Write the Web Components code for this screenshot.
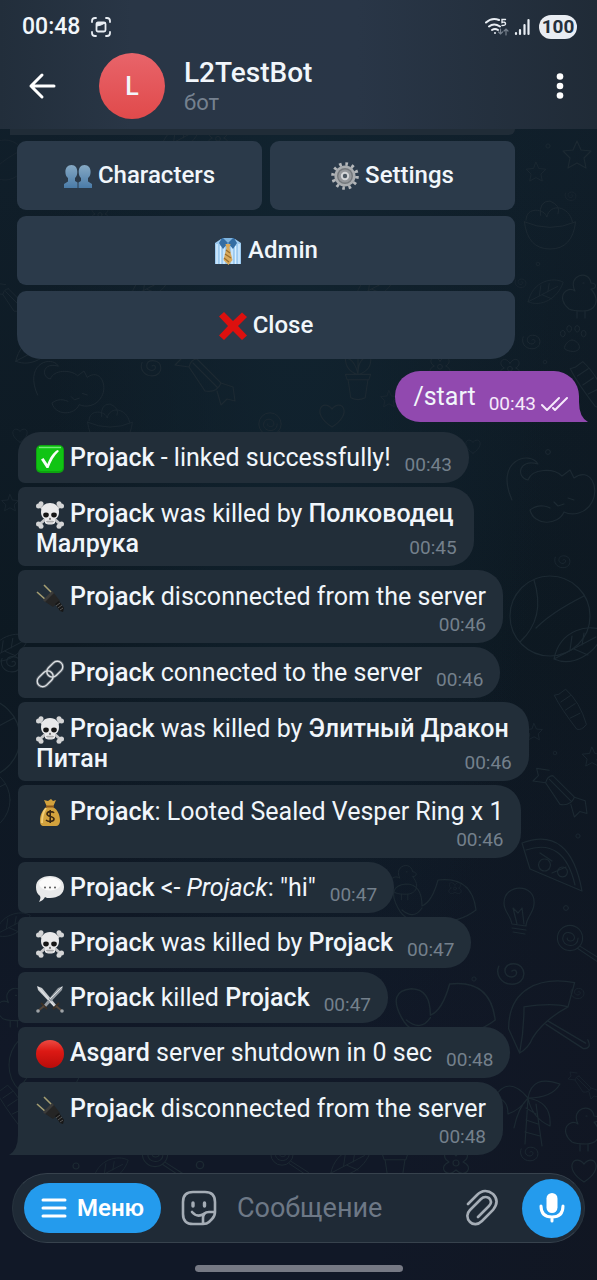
<!DOCTYPE html>
<html lang="ru">
<head>
<meta charset="utf-8">
<meta name="viewport" content="width=device-width, initial-scale=1">
<title>L2TestBot</title>
<style>
  html, body { margin: 0; min-height: 100%; background: #101a24; }
  body { font-family: Roboto, "Noto Sans", sans-serif; color: #f1f6fb; }
  em { font-style: italic; }
  b { font-weight: 500; }
</style>
</head>
<body>
<chat-screen>
  <status-bar slot="top" time="00:48" battery="100"></status-bar>
  <chat-header slot="top" name="L2TestBot" kind="бот" initial="L"></chat-header>

  <inline-keyboard>
    <key-button><emoji-icon name="people"></emoji-icon>Characters</key-button>
    <key-button><emoji-icon name="gear"></emoji-icon>Settings</key-button>
    <key-button wide><emoji-icon name="shirt"></emoji-icon>Admin</key-button>
    <key-button wide last><emoji-icon name="cross"></emoji-icon>Close</key-button>
  </inline-keyboard>

  <chat-message out time="00:43">/start</chat-message>
  <chat-message first time="00:43"><emoji-icon name="check"></emoji-icon><b>Projack</b> - linked successfully!</chat-message>
  <chat-message wrapped time="00:45"><emoji-icon name="skull"></emoji-icon><b>Projack</b> was killed by <b>Полководец<br>Малрука</b></chat-message>
  <chat-message below time="00:46"><emoji-icon name="plug"></emoji-icon><b>Projack</b> disconnected from the server</chat-message>
  <chat-message time="00:46"><emoji-icon name="link"></emoji-icon><b>Projack</b> connected to the server</chat-message>
  <chat-message wrapped time="00:46"><emoji-icon name="skull"></emoji-icon><b>Projack</b> was killed by <b>Элитный Дракон<br>Питан</b></chat-message>
  <chat-message below time="00:46"><emoji-icon name="money"></emoji-icon><b>Projack</b>: Looted Sealed Vesper Ring x 1</chat-message>
  <chat-message time="00:47"><emoji-icon name="speech"></emoji-icon><b>Projack</b> &lt;- <em>Projack</em>: "hi"</chat-message>
  <chat-message time="00:47"><emoji-icon name="skull"></emoji-icon><b>Projack</b> was killed by <b>Projack</b></chat-message>
  <chat-message time="00:47"><emoji-icon name="swords"></emoji-icon><b>Projack</b> killed <b>Projack</b></chat-message>
  <chat-message time="00:48"><emoji-icon name="red"></emoji-icon><b>Asgard</b> server shutdown in 0 sec</chat-message>
  <chat-message below last time="00:48"><emoji-icon name="plug"></emoji-icon><b>Projack</b> disconnected from the server</chat-message>

  <message-composer slot="bottom"></message-composer>
</chat-screen>

<script>
const define = (name, render) => customElements.define(name, class extends HTMLElement {
  constructor() { super(); this.attachShadow({ mode: 'open' }); }
  connectedCallback() { this.shadowRoot.innerHTML = render(this); }
});

/* Emoji artwork, each on a 28 x 28 grid */
const EMOJI = {
  people: ['👥', `<defs><linearGradient id="g" x2="0" y2="1"><stop stop-color="#86a9c4"/><stop offset="1" stop-color="#4a7ba8"/></linearGradient></defs>
    <g fill="url(#g)"><path d="M7.500 3C11.500 3 13.300 6 13.300 10c0 3-1 5-2.300 6v3l2.500 1.500V26H0v-4l4-2.500V16c-1.500-1-2.600-3-2.600-6 0-4 2.100-7 6.100-7z"/><path d="M20.500 3c4 0 6.100 3 6.100 7 0 3-1.100 5-2.600 6v3.500l4 2.500v4H14.500v-5.500L17 19v-3c-1.300-1-2.300-3-2.300-6 0-4 1.800-7 5.800-7z"/></g>`],
  gear: ['⚙️', `<circle cx="14" cy="14" r="12" fill="none" stroke="#b4b7ba" stroke-width="3.600" stroke-dasharray="2.600 3.683"/>
    <circle cx="14" cy="14" r="10.600" fill="#a9acaf"/><circle cx="14" cy="14" r="8" fill="#74787c"/><circle cx="14" cy="14" r="6.600" fill="#94979b"/><circle cx="14" cy="14" r="3.200" fill="#4c5761" stroke="#d4d6d8" stroke-width="2"/>`],
  shirt: ['👔', `<path d="M7 2 1 6v21h26V6l-6-4z" fill="#9ccaf0"/><path d="M3 7v20M6.500 9v18M10 9v18M18 9v18M21.500 9v18M25 7v20" stroke="#d9efff" stroke-width="1.4"/>
    <path d="M8 1h12l3 5-4 6-5-6-5 6-4-6z" fill="#346da3"/><path d="m9 1 5 5 5-5z" fill="#7fb4df"/><path d="m11.500 7 5 0 -1 4 3 12-4 5-5-5 3-12z" fill="#d8a95c"/><path d="m12 13 4 3m-5 1 6 4m-7 0 5 4" stroke="#9a6e2d" stroke-width="1.3"/>`],
  cross: ['❌', `<path d="M0 4.500 5 0l9 9 9-8.500L28 5l-9 9 9 9.500-5 4.500-9-9-9 9-5-4.500L9 14z" fill="#dd100e"/>`],
  check: ['✅', `<rect width="28" height="28" rx="5" fill="#0da50f"/><rect x="1" y="1" width="26" height="25" rx="4" fill="#10c414"/><path d="M3 2.500h22" stroke="#75e978" stroke-width="1.400"/><path d="M5 14.500 7.500 13l4 6C13.500 13 17 7.500 21.500 5l1.500 1c-5 4.500-8 10.500-10.500 17h-2z" fill="#f8fff8"/>`],
  skull: ['☠️', `<g stroke="#c5c6c8" stroke-width="3" stroke-linecap="round"><path d="m4 5 20 18M24 5 4 23"/></g><g fill="#d4d5d6"><circle cx="2.500" cy="5" r="2.500"/><circle cx="5" cy="2.800" r="2.500"/><circle cx="25.500" cy="5" r="2.500"/><circle cx="23" cy="2.800" r="2.500"/><circle cx="2.500" cy="23" r="2.500"/><circle cx="5" cy="25.300" r="2.500"/><circle cx="25.500" cy="23" r="2.500"/><circle cx="23" cy="25.300" r="2.500"/></g>
    <path d="M14 2c6 0 9 4 9 9 0 3-1 6-4 7v4c-2 2-8 2-10 0v-4c-3-1-4-4-4-7 0-5 3-9 9-9z" fill="#e9e9ea"/><ellipse cx="10" cy="14" rx="2.800" ry="2.400" fill="#151515"/><ellipse cx="18" cy="14" rx="2.800" ry="2.400" fill="#151515"/><path d="m14 16.500-1.200 2h2.400z" fill="#333"/><path d="M10 20.500h8M12 19.500v3M14 19.500v3M16 19.500v3" stroke="#9c9c9c" stroke-width=".7"/>`],
  plug: ['🔌', `<path d="m1 8 9 8M8 1l8 8" stroke="#a59e72" stroke-width="1.600"/><path d="m8 17 9-9 7 9-7 6z" fill="#252525"/><path d="m7 16 9-9 2 2-9 9z" fill="#3b3b3a"/><path d="m19 20 4-3 5 7-1 4-3-1z" fill="#171717"/><path d="m20 22 4-3m-2 5 4-3m-2 5 3-2" stroke="#686868" stroke-width=".8"/>`],
  link: ['🔗', `<g fill="none" stroke="#5e666e" stroke-width="3"><rect x="-9" y="-5.500" width="18" height="11" rx="5.500" transform="translate(18.800 9.200) rotate(-45)"/><rect x="-9" y="-5.500" width="18" height="11" rx="5.500" transform="translate(9.200 18.800) rotate(-45)"/></g>
    <g fill="none" stroke="#dfe3e6" stroke-width="1.300"><rect x="-9" y="-5.500" width="18" height="11" rx="5.500" transform="translate(18.800 9.200) rotate(-45)"/><rect x="-9" y="-5.500" width="18" height="11" rx="5.500" transform="translate(9.200 18.800) rotate(-45)"/></g>`],
  money: ['💰', `<path d="m8 1 4 1 3-2 2 2 3-1-3 7c5 3 7 8 7 14 0 3-2 5-4 5H8c-3 0-4-2-4-5 0-6 2-11 7-14z" fill="#d3a23d"/><path d="M10 9c-3 4-4 9-4 15" fill="none" stroke="#f3ce76" stroke-width="2"/><path d="M10 7.500h8" stroke="#8a561d" stroke-width="2"/><path d="M18 14c-1-2-7-2-7 1s7 2 7 5-6 3-8 1M14.200 11v13" fill="none" stroke="#392713" stroke-width="1.600"/>`],
  speech: ['💬', `<path d="M14 1c8 0 14 4 14 11s-6 11-14 11c-2 0-4 0-5-1-1 2-3 4-6 5 1-2 2-4 1-6-3-2-4-5-4-9C0 5 6 1 14 1z" fill="#e8e9ea"/><ellipse cx="14" cy="9" rx="11" ry="6.500" fill="#fafafa"/><g fill="#555"><circle cx="9" cy="12.500" r="1"/><circle cx="14" cy="12.500" r="1"/><circle cx="19" cy="12.500" r="1"/></g>`],
  swords: ['⚔️', `<path d="m1 1 5 2 15 18-2 2L2 5z" fill="#c7cbcf"/><path d="m27 1-5 2L7 21l2 2L26 5z" fill="#959ca3"/><path d="m2 2 17 20M26 2 14 14" stroke="#f1f3f4" stroke-width=".8"/><path d="m17 24 6-6M5 18l6 6" stroke="#3b3025" stroke-width="2"/><path d="m20 21 6 5M8 21l-6 5" stroke="#55473b" stroke-width="2"/><circle cx="2" cy="26" r="1.800" fill="#9ea3a7"/><circle cx="26" cy="26" r="1.800" fill="#9ea3a7"/>`],
  red: ['🔴', `<defs><linearGradient id="r" x2="0" y2="1"><stop stop-color="#ec4a42"/><stop offset=".4" stop-color="#dc1914"/><stop offset="1" stop-color="#b80c0a"/></linearGradient></defs><circle cx="14" cy="14" r="14" fill="url(#r)"/>`]
};

define('emoji-icon', el => {
  const [label, art] = EMOJI[el.getAttribute('name')];
  return `<style>:host{display:inline-block;width:28px;height:28px;margin-right:6px;vertical-align:-7px}svg{display:block}</style>
  <svg width="28" height="28" viewBox="0 0 28 28" role="img" aria-label="${label}">${art}</svg>`;
});

/* Line doodles scattered over the chat wallpaper */
const DOODLES = {
  star: 'M0-14 4-5 14-4 7 3 9 13 0 8-9 13-7 3-14-4-4-5z',
  heart: 'M0 12C-22-2-9-17 0-6 9-17 22-2 0 12z',
  spiral: 'M0 0c4-3 6 4 0 5-8 0-8-11 1-11 12 0 12 17-1 17-9 0-14-8-11-15',
  ring: 'M3 0A3 3 0 1 1-3 0 3 3 0 1 1 3 0',
  flower: 'M0-6c8-12 17 1 7 6 12 5 2 17-7 8-9 9-19-3-7-8-10-5-1-18 7-6zM3 1a3 3 0 1 1-6 0 3 3 0 0 1 6 0',
  pot: 'M-14-4h28l-2 6h-24zM-11 2l3 20q8 4 16 0l3-20M0-4Q-4-22-14-22-14-8 0-4 0-24 14-24 16-8 0-4M0-4v-28',
  leaf: 'M-24 14C-18-16 12-22 26-14 18 10-6 22-24 14zM-24 14 18-8M-8 5l2-14M4 0l2-12M-4 4l14 6',
  bowl: 'M-32-4q32 14 64 0-4 34-32 34T-32-4zM-30-6c0-18 24-14 26-4 4-18 28-14 32 6M-12-12q-2-18 12-18 14 6 10 16',
  candy: 'M-12-12 12 12M-8-16 16 8q-4 10-16 8L-16-8q2-8 8-8zM-16-8l-14-2 6-6-2-8 14 2M12 16l4 14 6-6 8 2-2-14-12-4',
  cat: 'M-28 0c-18-40 18-50 26-36-20-6-22 14-10 16 4-12 26-12 34-4l8-6 4 8c16-12 26 10 18 24-6 12-20 14-28 10-6 14-30 14-34-2 10-8 20-2 20-2M14 2l4 4 6-2M28-2l6 2',
  ball: 'M40 0A40 40 0 1 1-40 0 40 40 0 1 1 40 0zM-16-36Q-4 2-30 26M-14 12Q2-4 34-20',
  pizza: 'M-28-22Q20-40 32 26L-20 4zM-24-15Q14-28 25 20M-6-6a6 6 0 1 0 1 0M12 2a5 5 0 1 0 1 0M-10-12l12 8M2 8l14-6',
  bulb: 'M-8 12C-10 2-16 0-16-9-16-29 16-29 14-8 14 0 6 6 6 14zM-8 16l14 2M-7 20l12 2M-3 12l-4-16 5 5 4-5 2 16',
  lolly: 'M14 0a14 14 0 1 1-28 0 14 14 0 0 1 28 0zM9 0C9 12-9 10-8 0-7-9 5-7 5 0 4 5-4 4-3 0M11 9l22 14M9 12l21 14',
  umbrella: 'M-34 8C-34-28-6-40 26-34L20-12Q6-16-20-12M-34 8-24 30q8-4 12-14Q-2 0 20-12M-20-12Q-20 10-24 30M0 4l34 22q8 0 4-8M2 1l34 20',
  palm: 'M0 0q-20-24-34 0 14 0 14 16Q-8 12 0 0 4-24 32-14 24 0 0 0q24 4 22 28Q4 20 0 0q-10 10-14 30M0 0l-3 46M8 6l6 42M-2 10l10 6M-2 22l12 4M-3 34l15 4',
  duck: 'M-10 12c-14-12-2-24 6-18-8-16 14-22 16-8 6 0 6 6 0 6 10 12 4 22-8 22-6 0-10 0-14-2zM4-14h1M-2 14v7M6 14v7',
  paw: 'M0 0c6 0 12 8 8 12s-12 2-16 0 2-12 8-12zM-12-4a3 4 0 1 1 1 0M-4-10a3 4 0 1 1 1 0M6-10a3 4 0 1 1 1 0M14-4a3 4 0 1 1 1 0',
  whale: 'M-32 8q-12-22 8-24 16 0 16 22 10-4 16-26 34-4 38 30-18 14-46 12-24 2-32-14zM-28 10q12 10 20-2',
  carrot: 'M-16-20-8-26q18 16 26 44-6 8-12 6Q-14-2-22-18zM-14-10l12-8M-8 0l12-8M-2 10l12-6'
};
const PLACES = [
  ['star',577,155,1],['star',536,172,.7],['bowl',550,225,.8],['spiral',571,195,.5],['leaf',545,292,.7],['spiral',521,282,.5],['duck',579,297,1],['paw',572,340,.8],['spiral',532,340,.8],['pot',358,378,.9],['star',389,399,.6],
  ['cat',540,500,1],['heart',473,446,.6],['spiral',563,560,.7],['ring',548,452,.8],['ball',550,616,1],['leaf',578,645,1],['carrot',572,710,.8],['candy',560,790,.9],['star',592,757,.7],['star',534,732,.6],['pizza',550,865,1],['bulb',520,912,1],['lolly',570,938,.9],['umbrella',546,1020,1.1],['spiral',578,992,.6],['spiral',512,971,1.2],['palm',528,1098,1],['candy',583,1084,.5],['whale',440,1008,1.200],['whale',430,900,1],['duck',403,883,.8],['flower',455,888,.5],['duck',582,1130,1],['heart',332,415,1],['lolly',270,424,.8],['candy',205,375,1],['cat',60,395,.8],['leaf',35,350,.8],['candy',14,300,.7],['spiral',152,366,.9],['flower',510,368,.8],['flower',440,366,.8],['carrot',590,385,.9],
  ['bowl',110,425,.7],['heart',20,435,.6],['star',10,503,.6],['leaf',8,648,.8],['spiral',12,662,.9],['ball',-20,738,1],['ball',-22,800,.8],['leaf',12,925,.7],['duck',12,1008,.9],['ball',45,1065,.9],['carrot',14,1106,.8],['lolly',155,1154,.9],['ring',76,1166,1],['ring',200,1165,1.200],['leaf',110,1170,.7],['lolly',282,1154,.8],['pot',395,1158,.9],['flower',456,1162,1],['leaf',350,1162,.8],['spiral',530,1152,.8],['heart',584,1170,1],['ball',5,160,.5],['leaf',180,138,.8],['flower',218,138,.8],['flower',100,214,.7],['leaf',150,286,.8],['leaf',375,286,.8],['ring',548,146,.7],['ring',538,264,.6],['ring',545,362,.6],['ring',578,836,.7],['ring',566,908,.8],['ring',474,979,.7],['ring',555,753,.6]
];

define('chat-wallpaper', () => `<style>
  :host{display:block;overflow:hidden;background:radial-gradient(ellipse at 50% 20%,#11232f 0,transparent 60%),linear-gradient(100deg,transparent 72%,#10141c66),linear-gradient(#11202c 0,#0d1922 50%,#111827 82%,#111827)}
  svg{display:block;width:100%;height:100%}
  g{fill:none;stroke:#1c2932;stroke-width:1.200;stroke-linejoin:round;stroke-linecap:round}
</style><svg viewBox="0 0 597 1280" preserveAspectRatio="xMidYMin slice" aria-hidden="true"><g>
${PLACES.map(([n, x, y, s]) => `<path d="${DOODLES[n]}" transform="translate(${x} ${y}) scale(${s})"/>`).join('')}</g></svg>`);

define('chat-screen', () => `<style>
  :host{display:block;position:relative;isolation:isolate}
  chat-wallpaper{position:absolute;inset:0;z-index:-1}
  .page{display:flex;flex-direction:column;min-height:100vh}
  header{background:linear-gradient(90deg,#222e3b,#293646 22%,#293647 60%,#202b37);padding-bottom:8px}
  main{flex:1;display:flex;flex-direction:column;gap:4px;padding:0 18px 17px}
  .earlier{height:6px;margin:0 64px 0 -8px;background:#202c37;border-radius:0 0 20px 0;margin-bottom:2px}
</style><chat-wallpaper></chat-wallpaper>
<div class="page"><header><slot name="top"></slot></header>
<main><div class="earlier"></div><slot></slot></main><slot name="bottom"></slot></div>`);

define('status-bar', el => `<style>
  :host{display:flex;align-items:center;height:53px;padding:0 20px 0 22px}
  time{font-size:23px;line-height:28px;font-weight:500;margin-right:11px}
  svg{display:block}.wifi{margin-left:auto;margin-right:5px}.bars{margin-right:9px}
  .battery{width:38px;height:24px;border-radius:12px;background:#e9edf3;color:#25303c;font-size:19px;line-height:24px;font-weight:700;text-align:center}
</style><time>${el.getAttribute('time')}</time>
<svg width="20" height="20" viewBox="0 0 20 20" fill="none" stroke="#e8edf3" stroke-width="1.800" stroke-linecap="round"><path d="M1 5V4q0-3 3-3h1M15 1h1q3 0 3 3v1M19 15v1q0 3-3 3h-1M5 19H4q-3 0-3-3v-1"/><rect x="5.500" y="5.500" width="9" height="9" rx="1.500"/><path d="m6 9 4-1 4-2H6z" fill="#e8edf3" stroke-width="1"/></svg>
<svg class="wifi" width="24" height="20" viewBox="0 0 24 20" fill="none" stroke="#e8edf3" stroke-width="2" stroke-linecap="round"><path d="M1 5.500Q7 0 14 3M4 9.500q5-4 11 0M7 13q3-2 6 0"/><circle cx="10" cy="16" r="1" fill="#e8edf3" stroke="none"/><path d="M20.500 2.500H17v3q3-1 3.500 1t-3.500 2" stroke-width="1.400"/><path d="M15.500 12v5m-2-2 2 2 2-2M21 18v-6m-2 2 2-2 2 2" stroke="#77818e" stroke-width="1.200"/></svg>
<svg class="bars" width="16" height="18" viewBox="0 0 16 18" stroke="#e8edf3" stroke-width="2.200" stroke-linecap="round"><path d="M2 15v1M6 12v4M10.500 7v9M14.500 2v14"/></svg>
<span class="battery">${el.getAttribute('battery')}</span>`);

define('chat-header', el => `<style>
  :host{display:flex;align-items:center;height:66px;padding:0 22px 2px 24px}
  button{border:0;background:none;padding:0;color:inherit;display:grid;place-items:center;width:36px;height:48px}
  .more{width:30px}
  .avatar{width:66px;height:66px;margin:0 19px 0 39px;border-radius:50%;background:linear-gradient(#e8646a,#e04a4b);display:grid;place-items:center;font-size:25px;font-weight:500}
  .who{flex:1;min-width:0}
  h1{margin:0;font-size:28px;line-height:33px;font-weight:500}
  p{margin:0;font-size:22px;line-height:28px;color:#75818f}
</style>
<button aria-label="Назад"><svg width="28" height="28" viewBox="0 0 28 28" fill="none" stroke="#fff" stroke-width="3" stroke-linecap="round" stroke-linejoin="round"><path d="M3 14h23M14 3 3 14l11 11"/></svg></button>
<div class="avatar">${el.getAttribute('initial')}</div>
<div class="who"><h1>${el.getAttribute('name')}</h1><p>${el.getAttribute('kind')}</p></div>
<button class="more" aria-label="Ещё"><svg width="8" height="28" viewBox="0 0 8 28" fill="#fff"><circle cx="4" cy="4.500" r="3.300"/><circle cx="4" cy="14" r="3.300"/><circle cx="4" cy="23.500" r="3.300"/></svg></button>`);

define('inline-keyboard', () => `<style>
  :host{display:grid;grid-template-columns:1fr 1fr;gap:6px 8px;margin:0 64px 8px -1px}
</style><slot></slot>`);

define('key-button', () => `<style>
  :host{display:block}:host([wide]){grid-column:1/-1}
  button{width:100%;height:69px;border:0;border-radius:9px;padding:0;background:#2b3a4a;color:inherit;font:500 24px/29px Roboto,"Noto Sans",sans-serif}
  :host([last]) button{border-radius:9px 9px 24px 24px;height:68px}
</style><button><slot></slot></button>`);

define('chat-message', el => {
  const out = el.hasAttribute('out');
  return `<style>
  :host{display:block;align-self:flex-start;position:relative;font-size:25px;line-height:29px}
  .bubble{box-sizing:border-box;display:grid;grid-template-columns:auto auto;column-gap:14px;padding:11px 17px 0 18px;background:#222e39;border-radius:7px 25px 25px 7px;height:51px;white-space:nowrap}
  time{align-self:end;justify-self:end;font-size:19px;line-height:22px;padding-bottom:7px;color:#74808c;display:flex;align-items:center;gap:5px}
  :host([first]) .bubble{border-top-left-radius:22px}
  :host([below]) .bubble{grid-template-columns:auto;height:73px;padding-top:12px}
  :host([wrapped]) .bubble{grid-template-columns:auto;height:79px;padding-top:12px}
  :host([wrapped]) .text,:host([wrapped]) time{grid-area:1/1}
  :host([wrapped]) .text{padding-right:3px}
  :host([last]) .bubble{border-bottom-left-radius:0}
  :host([out]){align-self:flex-end;margin-bottom:6px}
  :host([out]) .bubble{background:#9149af;border-radius:25px 25px 0 25px;column-gap:13px;padding-right:10px}
  :host([out]) time{color:#f6e9fb}
  .tail{position:absolute;bottom:0;display:block}
  .in{left:-9px}.sent{right:-9px}
</style><div class="bubble"><div class="text"><slot></slot></div><time>${el.getAttribute('time')}${out ? '<svg width="28" height="16" viewBox="0 0 28 16" fill="none" stroke="#f6e9fb" stroke-width="2" stroke-linecap="round" stroke-linejoin="round"><path d="m1 9 5 5L18 2M12 12l2 2L26 2"/></svg>' : ''}</time></div>
${out ? '<svg class="tail sent" width="12" height="20" viewBox="0 0 12 20"><path d="M0 0h3q0 15 9 20H0z" fill="#9149af"/></svg>' : ''}
${el.hasAttribute('last') ? '<svg class="tail in" width="12" height="20" viewBox="0 0 12 20"><path d="M12 0H9q0 15-9 20h12z" fill="#222e39"/></svg>' : ''}`;
});

define('message-composer', () => `<style>
  :host{display:block;padding:0 12px 8px}
  form{display:flex;align-items:center;height:68px;margin:0;padding:0 3px 0 11px;border:1px solid #37424d;border-left-color:#28343f;border-right-color:#28343f;border-radius:35px;background:#1f2a36}
  button{border:0;padding:0;background:none;color:#fff;display:flex;align-items:center;justify-content:center;flex:none;font:600 24px/29px Roboto,"Noto Sans",sans-serif}
  .menu{width:137px;height:50px;border-radius:25px;background:#249bed;gap:10px}
  .sticker{width:36px;height:48px;margin-left:20px}
  .clip{width:34px;height:48px}
  .mic{width:59px;height:59px;border-radius:50%;background:#249bed;margin-left:23px}
  input{flex:1;min-width:0;height:48px;margin-left:20px;padding:0;border:0;outline:0;background:none;color:#f1f6fb;font:400 27px/32px Roboto,"Noto Sans",sans-serif}
  input::placeholder{color:#6d7886;opacity:1}
  .home{width:208px;height:7px;margin:22px auto 0;border-radius:4px;background:#767984}
</style><form>
<button class="menu" type="button"><svg width="26" height="20" viewBox="0 0 26 20" stroke="#fff" stroke-width="3" stroke-linecap="round"><path d="M2 2h22M2 10h22M2 18h22"/></svg>Меню</button>
<button class="sticker" type="button" aria-label="Стикеры"><svg width="36" height="36" viewBox="0 0 36 36" fill="none" stroke="#a5adb6" stroke-width="2.600" stroke-linecap="round" stroke-linejoin="round"><path d="M22 34H12Q2 34 2 24V12Q2 2 12 2h12q10 0 10 10v10q0 4-3 7l-3 3q-2 2-6 2zM22 34v-6q0-6 6-6h6"/><path d="M12 13v3M23.500 13v3" stroke-width="3.400"/><path d="M11 22q5 6 12 2"/></svg></button>
<input type="text" placeholder="Сообщение" aria-label="Сообщение">
<button class="clip" type="button" aria-label="Прикрепить"><svg width="34" height="38" viewBox="0 0 34 38" fill="none" stroke="#a5adb6" stroke-width="2.600" stroke-linecap="round"><path d="M3 15 12 6c5-5 11-5 16-1 5 5 4 11 0 16L17 32c-4 4-9 4-12 1-4-4-3-9 0-12l11-11c3-3 6-2 8-1 3 3 2 6 0 8L13 28"/></svg></button>
<button class="mic" type="button" aria-label="Голосовое сообщение"><svg width="28" height="34" viewBox="0 0 28 34" fill="none" stroke="#fff" stroke-width="3" stroke-linecap="round"><rect x="8.500" y="2" width="11" height="20" rx="5.500" fill="#fff" stroke="none"/><path d="M3 15q0 11 11 11t11-11M14 26v4"/></svg></button>
</form><div class="home"></div>`);
</script>
</body>
</html>
